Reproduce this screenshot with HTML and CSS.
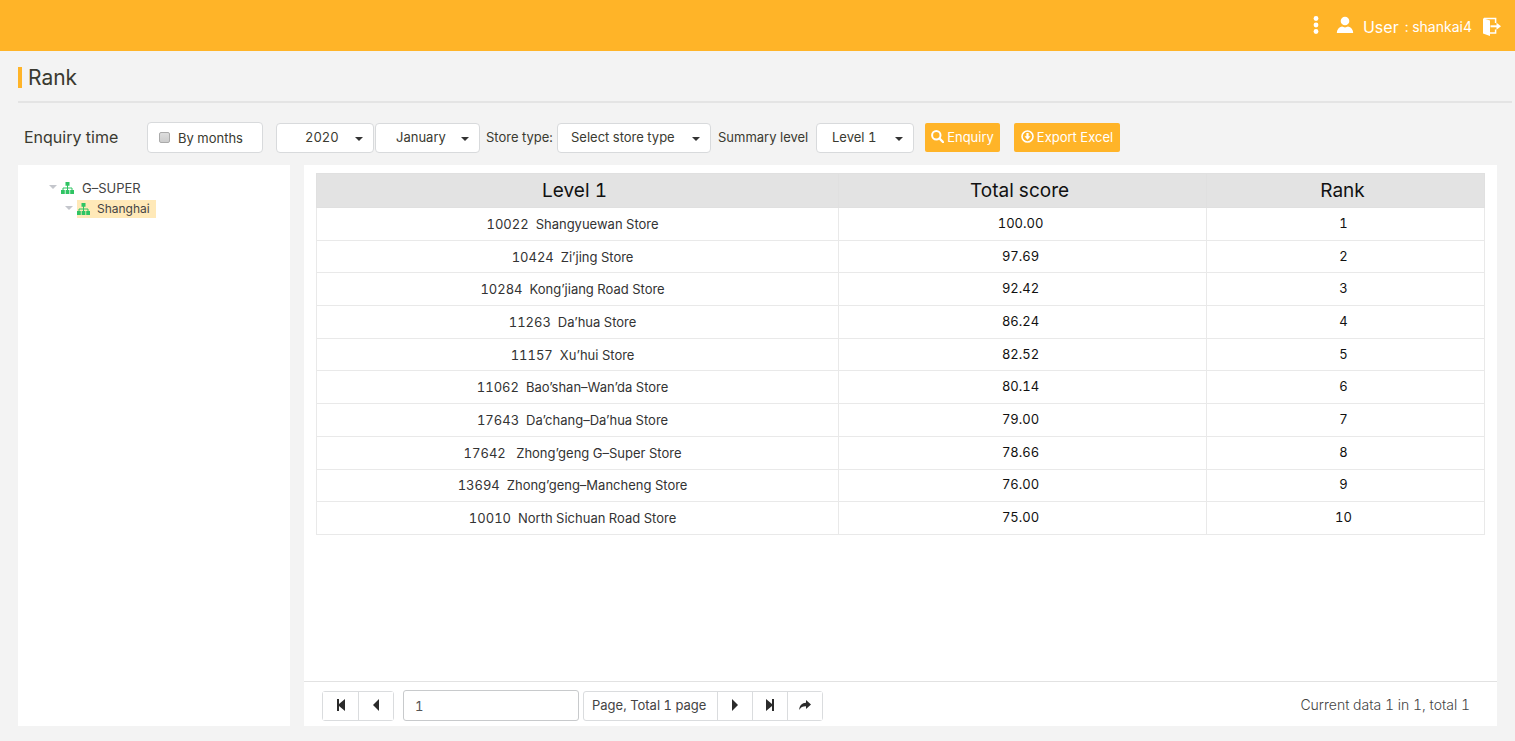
FILE: index.html
```html
<!DOCTYPE html>
<html lang="en">
<head>
<meta charset="utf-8">
<title>Rank</title>
<link rel="stylesheet" href="styles.css">
</head>
<body>
<header class="topbar">
  <button class="icon-btn more" aria-label="More">
    <svg width="6" height="20" viewBox="0 0 6 20" fill="currentColor"><circle cx="3" cy="3.500" r="2.400"/><circle cx="3" cy="10" r="2.400"/><circle cx="3" cy="16.500" r="2.400"/></svg>
  </button>
  <svg class="avatar" width="18" height="18" viewBox="0 0 18 18" fill="currentColor"><circle cx="9" cy="5" r="4.300"/><path d="M.8 17c0-3.600 2-6 5.200-6.600L9 11.600l3-1.200c3.200.6 5.200 3 5.200 6.600z"/></svg>
  <span class="user-label">User</span>
  <span class="user-name">: shankai4</span>
  <a class="logout" href="#" aria-label="Log out">
    <svg width="18" height="20" viewBox="0 0 18 20"><path d="M0 1.200 7 3.600V19L0 16.400z" fill="currentColor"/><path d="M1 1.400h11.600V6M12.600 12.500v3.500H7" fill="none" stroke="currentColor" stroke-width="1.500"/><path d="M7.500 9.300h7" stroke="currentColor" stroke-width="2"/><path d="M13.500 5.800 18 9.300l-4.500 3.500z" fill="currentColor"/></svg>
  </a>
</header>

<div class="title-bar"><h1 class="title">Rank</h1></div>

<form class="filters">
  <span class="filters-title">Enquiry time</span>
  <label class="check-box"><input class="check" type="checkbox">By months</label>
  <div class="period">
    <span class="picker year"><select class="select" aria-label="Year"><option>2020</option></select></span>
    <span class="picker month"><select class="select" aria-label="Month"><option>January</option></select></span>
  </div>
  <label class="filter-label" for="store-type">Store type:</label>
  <span class="picker store"><select class="select" id="store-type"><option>Select store type</option></select></span>
  <label class="filter-label summary-label" for="summary-level">Summary level</label>
  <span class="picker level"><select class="select" id="summary-level"><option>Level 1</option></select></span>
  <button class="action enquiry" type="button">
    <svg width="13" height="13" viewBox="0 0 13 13" fill="none" stroke="currentColor"><circle cx="5.300" cy="5.300" r="4.200" stroke-width="2"/><path d="m8.500 8.500 3.500 3.500" stroke-width="2.400" stroke-linecap="round"/></svg>Enquiry
  </button>
  <button class="action export" type="button">
    <svg width="13" height="13" viewBox="0 0 13 13"><circle cx="6.500" cy="6.500" r="5.500" fill="none" stroke="currentColor" stroke-width="1.600"/><path d="M5.400 3h2.200v3.200h1.900L6.500 9.800 3.500 6.200h1.900z" fill="currentColor"/></svg>Export Excel
  </button>
</form>

<main class="content">
  <nav class="tree" aria-label="Stores">
    <ul class="tree-list">
      <li>
        <div class="node"><i class="twisty"></i><a class="node-link" href="#"><svg class="org" width="13" height="12" viewBox="0 0 13 12"><path d="M6.500 3v5M2 8.500V6h9v2.500" fill="none" stroke="currentColor"/><path d="M4.500 0h4v3.800h-4zM0 8h3.800v4H0zM4.600 8h3.800v4H4.600zM9.200 8H13v4H9.200z" fill="currentColor"/></svg>G–SUPER</a></div>
        <ul class="tree-list">
          <li><div class="node child"><i class="twisty"></i><a class="node-link selected" href="#"><svg class="org" width="13" height="12" viewBox="0 0 13 12"><path d="M6.500 3v5M2 8.500V6h9v2.500" fill="none" stroke="currentColor"/><path d="M4.500 0h4v3.800h-4zM0 8h3.800v4H0zM4.600 8h3.800v4H4.600zM9.200 8H13v4H9.200z" fill="currentColor"/></svg>Shanghai</a></div></li>
        </ul>
      </li>
    </ul>
  </nav>

  <section class="results">
    <div class="table-area">
      <table class="scores">
        <colgroup><col class="col-store"><col class="col-score"><col class="col-rank"></colgroup>
        <thead><tr><th>Level 1</th><th>Total score</th><th>Rank</th></tr></thead>
        <tbody>
          <tr><td class="store-cell">10022&nbsp; Shangyuewan Store</td><td>100.00</td><td>1</td></tr>
          <tr><td class="store-cell">10424&nbsp; Zi’jing Store</td><td>97.69</td><td>2</td></tr>
          <tr><td class="store-cell">10284&nbsp; Kong’jiang Road Store</td><td>92.42</td><td>3</td></tr>
          <tr><td class="store-cell">11263&nbsp; Da’hua Store</td><td>86.24</td><td>4</td></tr>
          <tr><td class="store-cell">11157&nbsp; Xu’hui Store</td><td>82.52</td><td>5</td></tr>
          <tr><td class="store-cell">11062&nbsp; Bao’shan–Wan’da Store</td><td>80.14</td><td>6</td></tr>
          <tr><td class="store-cell">17643&nbsp; Da’chang–Da’hua Store</td><td>79.00</td><td>7</td></tr>
          <tr><td class="store-cell">17642&nbsp;&nbsp; Zhong’geng G–Super Store</td><td>78.66</td><td>8</td></tr>
          <tr><td class="store-cell">13694&nbsp; Zhong’geng–Mancheng Store</td><td>76.00</td><td>9</td></tr>
          <tr><td class="store-cell">10010&nbsp; North Sichuan Road Store</td><td>75.00</td><td>10</td></tr>
        </tbody>
      </table>
    </div>
    <footer class="pager">
      <div class="group">
        <button class="page-btn" aria-label="First page"><svg width="10" height="12" viewBox="0 0 10 12" fill="currentColor"><path d="M1 0h2v5l6-5v12L3 7v5H1z"/></svg></button>
        <button class="page-btn" aria-label="Previous page"><svg width="10" height="12" viewBox="0 0 10 12" fill="currentColor"><path d="M8 0v12L2 6z"/></svg></button>
      </div>
      <input class="page-input" type="text" value="1" aria-label="Page number">
      <div class="group">
        <span class="page-total">Page, Total 1 page</span>
        <button class="page-btn" aria-label="Next page"><svg width="10" height="12" viewBox="0 0 10 12" fill="currentColor"><path d="M2 0v12l6-6z"/></svg></button>
        <button class="page-btn" aria-label="Last page"><svg width="10" height="12" viewBox="0 0 10 12" fill="currentColor"><path d="M9 0H7v5L1 0v12l6-5v5h2z"/></svg></button>
        <button class="page-btn" aria-label="Go to page"><svg width="12" height="12" viewBox="0 0 12 12" fill="currentColor"><path d="M7 1l5 4.500L7 10V7.300C4 7.200 1.800 8 .3 11 .3 6.500 3 4 7 3.800z"/></svg></button>
      </div>
      <span class="summary">Current data 1 in 1, total 1</span>
    </footer>
  </section>
</main>
</body>
</html>
```
FILE: styles.css
```css
* { box-sizing: border-box; }

body {
  margin: 0;
  min-height: 100vh;
  display: flex;
  flex-direction: column;
  background: #f3f3f3;
  color: #3a3a30;
  font: 13px/20px Inter, "Liberation Sans", sans-serif;
  font-variant-numeric: tabular-nums;
}

button, input, select { font: inherit; color: inherit; margin: 0; }
button { cursor: pointer; }
svg { display: block; flex: none; }

.topbar {
  height: 51px;
  padding: 2px 14px 0 0;
  display: flex;
  align-items: center;
  justify-content: flex-end;
  background: #ffb428;
  color: #fff;
}
.icon-btn { border: 0; padding: 0; background: none; }
.more { margin: 0 17px 4px 0; }
.avatar { margin: 0 9px 4px 0; }
.user-label { font-size: 16px; margin-right: 6px; }
.user-name { font-size: 14px; }
.logout { color: inherit; margin-left: 11px; }

.title-bar {
  margin: 0 3px 0 18px;
  padding: 16px 0 13px;
  border-bottom: 2px solid #e4e4e4;
}
.title {
  margin: 0;
  padding-left: 6px;
  border-left: 4px solid #ffb428;
  font-size: 21px;
  line-height: 21px;
  font-weight: 400;
}

.filters {
  display: flex;
  align-items: center;
  padding: 19px 18px 12px 24px;
}
.filters-title { width: 123px; padding-bottom: 2px; font-size: 16px; flex: none; }
.check-box {
  display: flex;
  align-items: center;
  width: 116px;
  height: 31px;
  margin-right: 13px;
  padding-left: 11px;
  background: #fff;
  border: 1px solid #d8dadc;
  border-radius: 4px;
}
.check {
  appearance: none;
  width: 11px;
  height: 11px;
  margin-right: 8px;
  border: 1px solid #aaa;
  border-radius: 2px;
  background: linear-gradient(#ddd, #ccc);
}
.check:checked { background: #ffb428; }
.period { display: flex; gap: 1px; margin-right: 6px; }
.picker { position: relative; flex: none; }
.picker::after {
  content: "";
  position: absolute;
  right: 11px;
  top: 14px;
  border: 4px solid transparent;
  border-top-color: #333;
  border-bottom: 0;
  pointer-events: none;
}
.select {
  appearance: none;
  width: 100%;
  height: 30px;
  display: block;
  padding: 0 22px 2px 13px;
  background: #fff;
  border: 1px solid #d8dadc;
  border-radius: 4px;
}
.year { width: 98px; }
.year .select { padding-left: 28px; }
.month { width: 105px; }
.month .select { padding-left: 20px; }
.store { width: 154px; margin-right: 7px; }
.level { width: 98px; margin-right: 11px; }
.level .select { padding-left: 15px; }
.filter-label { width: 71px; padding-bottom: 2px; flex: none; white-space: nowrap; }
.summary-label { width: 98px; }
.action {
  display: flex;
  align-items: center;
  justify-content: center;
  gap: 3px;
  height: 29px;
  padding: 0 0 2px;
  border: 0;
  border-radius: 2px;
  background: #ffb428;
  color: #fff;
  white-space: nowrap;
}
.enquiry { width: 75px; margin-right: 14px; }
.export { width: 106px; }

.content {
  flex: 1;
  display: flex;
  gap: 14px;
  padding: 0 18px 15px;
}
.tree { width: 272px; flex: none; padding: 12px 0 0 30px; background: #fff; }
.tree-list { list-style: none; margin: 0; padding: 0; }
.tree-list .tree-list { padding-left: 16px; }
.node { display: flex; align-items: center; height: 21px; }
.twisty {
  margin: 0 4px 2px 1px;
  border: 4px solid transparent;
  border-top-color: #c4c6cc;
  border-bottom: 0;
}
.node-link {
  display: flex;
  align-items: center;
  gap: 8px;
  height: 18px;
  padding-right: 8px;
  color: #444;
  text-decoration: none;
}
.child .node-link { gap: 7px; padding-right: 6px; font-size: 12px; }
.selected { background: #ffe9b8; }
.org { color: #2fc463; }

.results { flex: 1; display: flex; flex-direction: column; background: #fff; }
.table-area { flex: 1; padding: 8px 12px; }
.scores {
  width: 100%;
  height: 362px;
  table-layout: fixed;
  border-collapse: collapse;
  text-align: center;
}
.col-store { width: 44.7%; }
.col-score { width: 31.5%; }
.col-rank { width: 23.8%; }
.scores th {
  height: 34px;
  padding: 0 6px 0 0;
  background: #e3e3e3;
  border: 1px solid #e0e0e0;
  color: #111;
  font-size: 19px;
  font-weight: 400;
}
.scores td { padding: 0 4px 2px 0; border: 1px solid #e9e9e9; color: #111; }
.scores .store-cell { padding: 0 10px 0 0; color: #333; }

.pager {
  display: flex;
  align-items: center;
  padding: 8px 27px 5px 18px;
  border-top: 1px solid #e2e2e2;
}
.group { display: flex; height: 30px; border: 1px solid #dadcde; border-radius: 3px; }
.page-btn {
  display: grid;
  place-items: center;
  width: 35px;
  padding: 0 0 1px;
  border: 0;
  background: #fff;
  color: #2b2b2b;
}
.page-btn + .page-btn, .page-total + .page-btn { border-left: 1px solid #dadcde; }
.page-input {
  width: 176px;
  height: 31px;
  margin: 0 4px 0 9px;
  padding: 0 11px;
  border: 1px solid #c8cacc;
  border-radius: 3px;
  background: #fff;
  color: #555;
}
.page-total { width: 133px; padding-left: 8px; line-height: 26px; color: #444; white-space: nowrap; }
.summary { margin-left: auto; padding-bottom: 2px; color: #444; font-size: 14px; font-weight: 300; }
```
